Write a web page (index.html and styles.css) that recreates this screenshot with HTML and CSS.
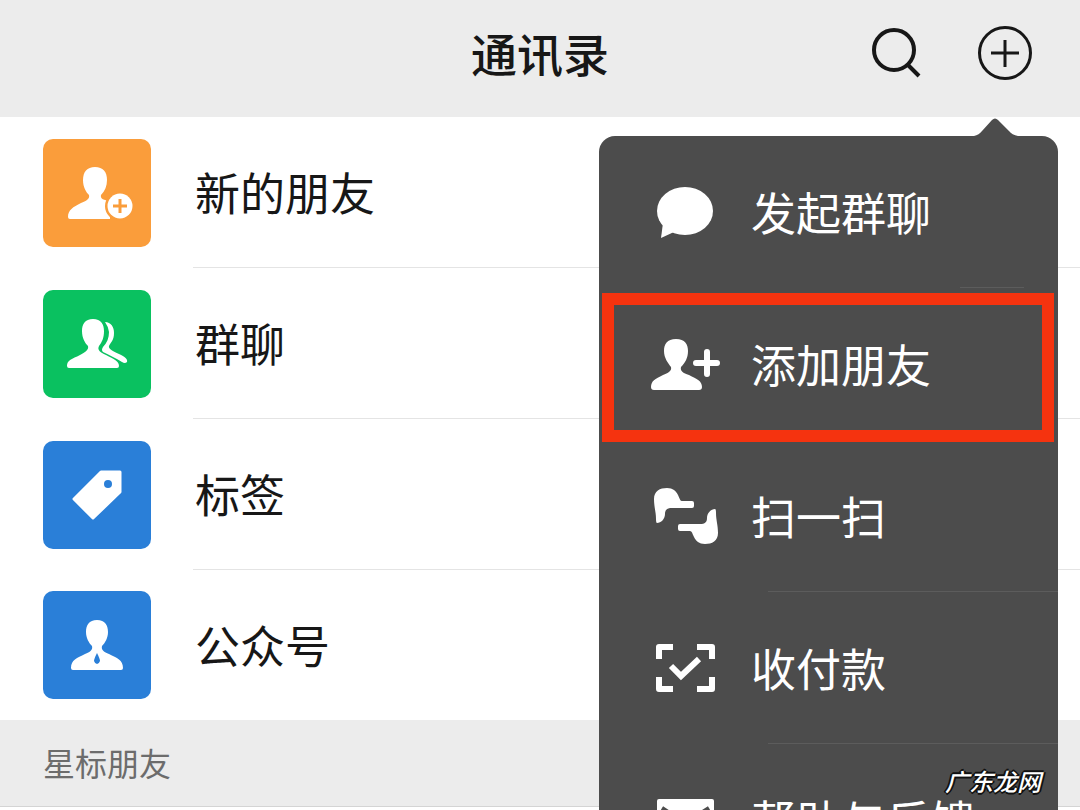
FILE: index.html
```
<!DOCTYPE html>
<html lang="zh-CN">

<head>
    <title>通讯录</title>
    <meta charset="UTF-8">
    <meta name="viewport" content="width=device-width, initial-scale=1">
    <link rel="stylesheet" href="styles.css">
</head>

<body>
    <header class="header">
        <h1>通讯录</h1>
        <div class="actions">
            <button type="button" class="iconbtn" aria-label="搜索">
                <svg viewBox="0 0 56 56">
                    <circle cx="26" cy="25" r="20" fill="none" stroke="#171717" stroke-width="4" />
                    <path d="M40 40L51 51" stroke="#171717" stroke-width="4" />
                </svg>
            </button>
            <button type="button" class="iconbtn" aria-label="更多">
                <svg viewBox="0 0 56 56">
                    <circle cx="28" cy="28" r="25.500" fill="none" stroke="#171717" stroke-width="3" />
                    <path d="M28 15V42M14 28H42" stroke="#171717" stroke-width="3" />
                </svg>
            </button>
        </div>
    </header>

    <main>
        <ul class="contacts">
            <li>
                <a href="#" class="contact">
                    <svg class="tile orange" viewBox="0 0 108 108">
                        <path fill="#fff" d="M52 28C44 28 40 33 40 41C40 48 43 53 46 56C47 60 43 62 38 64C30 68 25 71 25 78Q25 80 27 80H67V62C61 61 57 60 58 56C62 52 64 47 64 41C64 33 60 28 52 28Z" />
                        <circle cx="77" cy="67" r="15" fill="#fa9d3b" />
                        <circle cx="77" cy="67" r="12.500" fill="#fff" />
                        <path d="M77 60V74M70 67H84" stroke="#fa9d3b" stroke-width="3" />
                    </svg>
                    <span class="name">新的朋友</span>
                </a>
            </li>
            <li>
                <a href="#" class="contact">
                    <svg class="tile green" viewBox="0 0 108 108">
                        <path fill="#fff" d="M50 29C42 29 39 34 39 41C39 48 42 53 45 56C46 60 42 62 37 65C29 69 24 70 24 76Q24 78 26 78H74Q76 78 76 76C76 71 71 69 63 65C57 62 54 60 56 56C59 52 61 48 61 41C61 34 58 29 50 29Z" />
                        <path fill="#fff" d="M62 32C68 32 71 37 71 43C71 50 68 52 66 56C65 59 70 61 76 64C82 67 85 69 84 72Q82 74 79 72C73 68 66 65 60 62Q58 60 60 57C64 53 66 48 66 42Q65 36 62 32Z" />
                    </svg>
                    <span class="name">群聊</span>
                </a>
            </li>
            <li>
                <a href="#" class="contact">
                    <svg class="tile blue" viewBox="0 0 108 108">
                        <path fill="#fff" stroke="#fff" stroke-width="3" stroke-linejoin="round" d="M58 31H77V51L50 77L31 58Z" />
                        <circle cx="65" cy="43" r="4" fill="#2a7fd8" />
                    </svg>
                    <span class="name">标签</span>
                </a>
            </li>
            <li>
                <a href="#" class="contact">
                    <svg class="tile blue" viewBox="0 0 108 108">
                        <path fill="#fff" d="M54 29C46 29 43 34 43 41C43 47 46 52 49 55C50 59 47 61 42 63C34 67 28 69 28 77Q28 79 30 79H78Q80 79 80 77C80 69 74 67 66 63C61 61 58 59 59 55C62 52 65 47 65 41C65 34 62 29 54 29Z" />
                        <path fill="#2a7fd8" d="M54 62Q57 68 57 70Q56 73 54 73Q52 73 51 70Q51 68 54 62Z" />
                    </svg>
                    <span class="name">公众号</span>
                </a>
            </li>
        </ul>
        <h2 class="group">星标朋友</h2>
    </main>

    <nav class="menu">
        <svg class="arrow" viewBox="0 0 44 18">
            <path fill="#4c4c4c" d="M0 18Q5 17 8 13L18 2Q21 -1 24 2L35 13Q38 17 44 18Z" />
        </svg>
        <button type="button" class="item short">
            <svg viewBox="0 0 72 60">
                <ellipse cx="36" cy="29" rx="28" ry="24" />
                <path d="M14 41L12 56L25 50Z" />
            </svg>
            <span>发起群聊</span>
        </button>
        <button type="button" class="item marked">
            <svg viewBox="0 0 72 60">
                <path d="M27 5C18 5 15 10 15 17C15 24 19 29 22 33C23 37 19 39 14 41C6 45 2 47 2 53Q2 56 5 56H50Q53 56 53 53C53 47 48 45 40 41C34 39 31 37 32 33C36 29 39 24 39 17C39 10 36 5 27 5Z" />
                <path class="line round" d="M58 18V40M47 29H68" />
            </svg>
            <span>添加朋友</span>
        </button>
        <button type="button" class="item">
            <svg viewBox="0 0 72 60">
                <path id="hand" d="M5 13C5 5 11 2 18 2C24 2 27 5 29 9C31 13 31 15 33 15H43Q45 15 45 17V20Q45 22 43 22H23C18 22 16 24 16 28C16 33 12 37 8 37Q7 37 7 33C7 26 5 21 5 13Z" />
                <use href="#hand" transform="rotate(180 37 30)" />
            </svg>
            <span>扫一扫</span>
        </button>
        <button type="button" class="item">
            <svg viewBox="0 0 72 60">
                <path class="line" stroke-linejoin="round" d="M10 21V9H24M48 9H63V21M63 39V51H48M24 51H10V39" />
                <path class="line" d="M22 28L32 38L50 21" />
            </svg>
            <span>收付款</span>
        </button>
        <button type="button" class="item">
            <svg viewBox="0 0 72 60">
                <rect x="8" y="9" width="57" height="44" rx="2" />
                <path d="M13 18L36 33L60 18" fill="none" stroke="#4c4c4c" stroke-width="4" />
            </svg>
            <span>帮助与反馈</span>
        </button>
    </nav>

    <div class="watermark">广东龙网</div>
</body>

</html>
```
FILE: styles.css
```
* {
    box-sizing: border-box;
}

body {
    position: relative;
    height: 100vh;
    margin: 0;
    overflow: hidden;
    background: #fff;
    color: #171717;
    font-family: "Noto Sans CJK SC", sans-serif;
}

button {
    padding: 0;
    border: 0;
    background: none;
    color: inherit;
    font-family: inherit;
    cursor: pointer;
}

.header {
    display: grid;
    grid-template-columns: 1fr auto 1fr;
    align-items: center;
    height: 117px;
    padding: 0 47px 11px;
    background: #ececec;
}

.header h1 {
    grid-column: 2;
    margin: 0;
    padding-bottom: 2px;
    font-size: 46px;
    font-weight: 500;
    line-height: 60px;
}

.actions {
    display: flex;
    justify-content: flex-end;
    gap: 53px;
}

.iconbtn,
.iconbtn svg {
    display: block;
    width: 56px;
    height: 56px;
}

.contacts {
    margin: 0;
    padding: 0;
    list-style: none;
}

.contact {
    display: flex;
    align-items: center;
    padding-left: 43px;
    color: inherit;
    text-decoration: none;
}

.tile {
    flex: none;
    width: 108px;
    height: 108px;
    margin-right: 42px;
    border-radius: 10px;
}

.orange {
    background: #fa9d3b;
}

.green {
    background: #0ac160;
}

.blue {
    background: #2a7fd8;
}

.name {
    flex: 1;
    padding: 45px 0 45px 2px;
    border-bottom: 1px solid #e4e4e4;
    font-size: 45px;
    line-height: 60px;
}

.contacts li:last-child .name {
    border-bottom: 0;
}

.group {
    margin: 0;
    padding: 18px 43px 20px;
    border-bottom: 1px solid #d4d4d4;
    background: #ececec;
    color: #6c6c6c;
    font-size: 32px;
    font-weight: 400;
    line-height: 48px;
}

/* 右上角弹出菜单 */
.menu {
    position: absolute;
    top: 136px;
    right: 22px;
    width: 42.5%;
    border-radius: 16px;
    background: #4c4c4c;
    color: #fff;
}

.arrow {
    position: absolute;
    top: -18px;
    right: 40px;
    width: 44px;
    height: 18px;
}

.item {
    position: relative;
    display: flex;
    align-items: center;
    gap: 30px;
    width: 100%;
    height: 152px;
    padding-left: 50px;
    font-size: 45px;
    line-height: 60px;
}

.item svg {
    flex: none;
    width: 72px;
    height: 60px;
    fill: #fff;
}

.item .line {
    fill: none;
    stroke: #fff;
    stroke-width: 6;
}

.item .round {
    stroke-linecap: round;
}

/* 分割线 */
.item::after {
    content: "";
    position: absolute;
    right: 0;
    bottom: 0;
    left: 169px;
    height: 1px;
    background: #5c5c5c;
}

.short::after {
    right: 34px;
    left: auto;
    width: 64px;
}

/* 红框标注 */
.marked::after {
    top: 5px;
    right: 4px;
    bottom: -2px;
    left: 3px;
    height: auto;
    border: 12px solid #f5330f;
    background: none;
}

.watermark {
    position: absolute;
    right: 39px;
    bottom: 11px;
    color: #fff;
    font-size: 24px;
    font-style: italic;
    font-weight: 500;
    line-height: 36px;
    text-shadow: 2px 0 #111, -2px 0 #111, 0 2px #111, 0 -2px #111, 1px 1px #111, -1px -1px #111;
}
```
